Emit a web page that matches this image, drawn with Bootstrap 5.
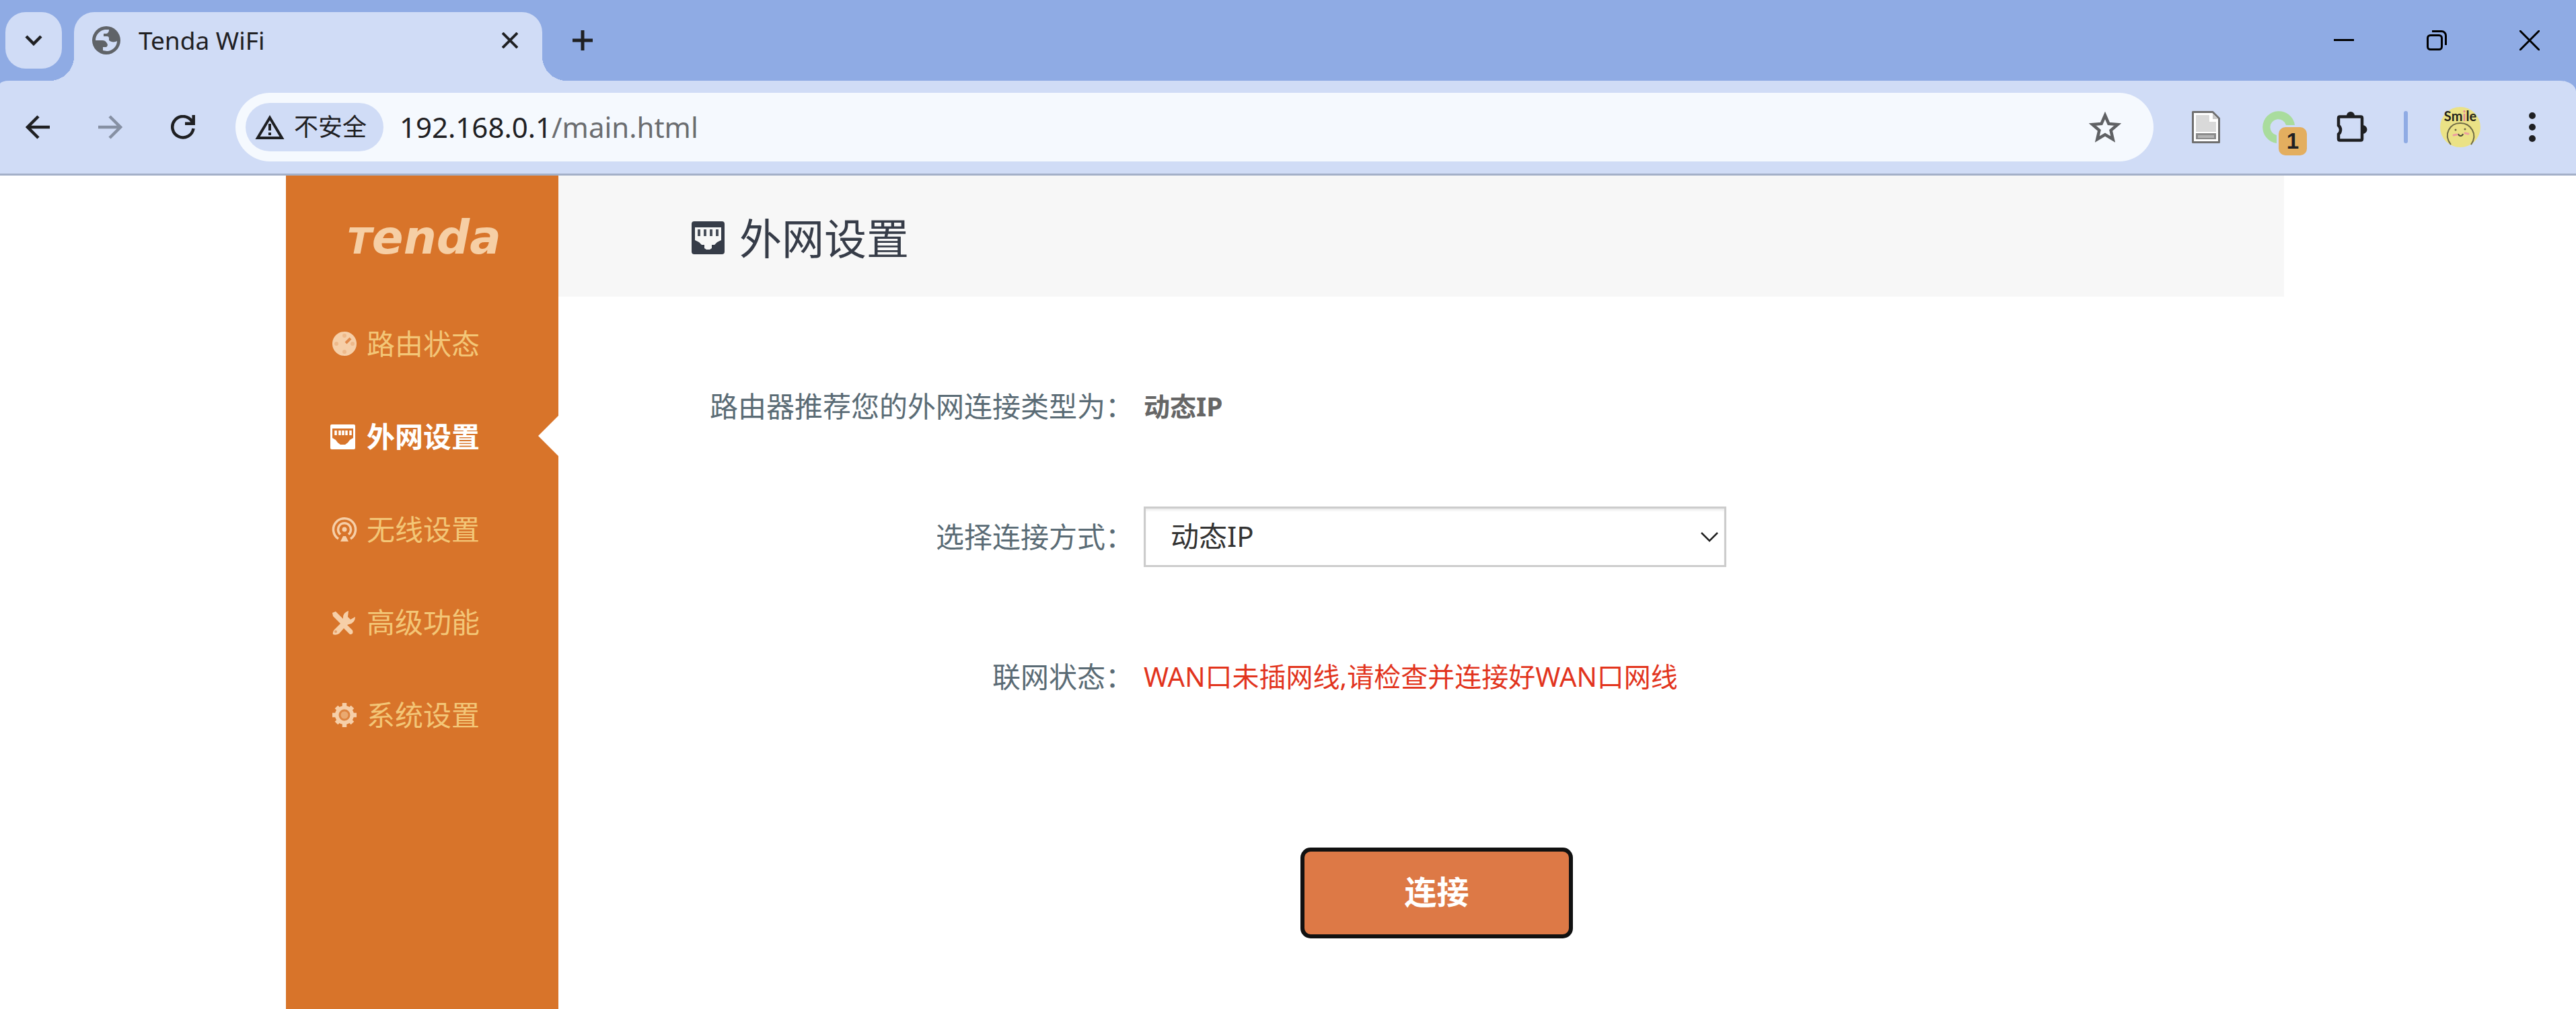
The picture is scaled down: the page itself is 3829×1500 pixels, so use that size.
<!DOCTYPE html>
<html lang="zh-CN">
<head>
<meta charset="utf-8">
<meta name="viewport" content="width=device-width, initial-scale=1">
<title>Tenda WiFi</title>
<link href="https://cdn.jsdelivr.net/npm/bootstrap@5.3.0/dist/css/bootstrap.min.css" rel="stylesheet">
<style>
  body { font-family: "Noto Sans", "Noto Sans CJK SC", sans-serif; color: #333; background: #fff; }
  svg { display: block; flex: none; }
  .icon-btn { background: none; border: 0; padding: 0; color: #1f2023; display: flex; align-items: center; justify-content: center; }

  /* tab strip */
  .tabstrip { height: 120px; background: #8fabe4; padding: 18px 0 0 8px; color: #1f2023; }
  .tab-search { width: 84px; height: 84px; border-radius: 30px; background: #d0dcf6; margin-right: 18px; }
  .tab-active { position: relative; width: 696px; height: 102px; border-radius: 30px 30px 0 0; background: #d0dcf6; padding: 0 36px 18px 27px; gap: 27px; font-size: 37px; line-height: 48px; }
  .tab-active::before, .tab-active::after { content: ""; position: absolute; bottom: 0; width: 36px; height: 36px; }
  .tab-active::before { right: 100%; background: radial-gradient(circle at 0 0, transparent 36px, #d0dcf6 36px); }
  .tab-active::after { left: 100%; background: radial-gradient(circle at 100% 0, transparent 36px, #d0dcf6 36px); }
  .tab-new { width: 84px; height: 84px; margin-left: 18px; }
  .win-btn { width: 138px; height: 84px; color: #000; }

  /* toolbar */
  .toolbar-wrap { background: #8fabe4; }
  .toolbar { height: 141px; border-bottom: 3px solid #a4b0c8; background: #d0dcf6; border-radius: 14px 24px 0 0 / 5px 16px 0 0; padding-left: 2px; }
  .tool-btn { width: 108px; height: 102px; }
  .tool-btn.is-off { color: #8690a3; }
  .omnibox { height: 102px; border-radius: 51px; background: #f5f9fe; margin-left: 24px; padding: 0 48px 0 15px; }
  .omnibox .fav-star { color: #5f6164; }
  .chip { height: 72px; border-radius: 36px; background: #d0dcf6; color: #1f2023; font-size: 36px; line-height: 48px; padding: 0 25px 0 14px; gap: 14px; }
  .address { font-size: 42px; line-height: 60px; margin-left: 24px; color: #1f2023; text-decoration: none; }
  .address span { color: #6b6d70; }
  .ext-tray { padding: 0 60px 0 54px; gap: 54px; }
  .ext-group { gap: 60px; }
  .ext-btn { width: 48px; height: 72px; position: relative; }
  .ext-count { position: absolute; left: 24px; top: 36px; width: 42px; height: 42px; border-radius: 10px; background: #e3ae5f; color: #1f2023; font: bold 33px/42px "Liberation Sans", sans-serif; text-align: center; }
  .tool-divider { width: 6px; height: 48px; border-radius: 3px; background: #8fabe4; }
  .tray-end { gap: 48px; }
  .menu-dots { margin-left: 24px; }

  /* router page */
  .page { padding-right: 9px; }
  .page-inner { max-width: 2970px; width: 100%; }
  .side { width: 405px; background: #d8742a; }
  .brand { height: 180px; color: #f6cfa5; font: italic bold 69px/1 "DejaVu Sans", sans-serif; padding: 58px 0 0 91px; text-decoration: none; }
  .brand span { font-size: 54px; }
  .side .nav-link { height: 138px; padding: 2px 0 0 66px; gap: 12px; font-size: 42px; line-height: 60px; color: #f3c677; position: relative; }
  .side .nav-link svg { color: #f6cfa8; }
  .side .nav-link.active { color: #fff; font-weight: 700; }
  .side .nav-link.active svg { color: #fff; }
  .side .nav-link.active::after { content: ""; position: absolute; right: 0; top: 39px; border: solid transparent; border-width: 30px 30px 30px 0; border-right-color: #fff; }
  .page-head { height: 180px; background: #f7f7f7; color: #363c48; padding: 5px 0 0 198px; gap: 22px; }
  .page-head h1 { font-size: 63px; line-height: 90px; font-weight: 400; margin: 0; }
  .wan-form { padding-top: 118px; font-size: 42px; }
  .form-line { min-height: 90px; line-height: 60px; }
  .form-line .name { color: #5a6b75; }
  .form-line .val { padding-left: 15px; }
  .gap-a { margin-bottom: 104px; }
  .gap-b { margin-bottom: 118px; }
  .gap-c { margin-bottom: 209px; }
  .form-line .kind { color: #666; font-size: 39px; }
  .form-line .warn { color: #e2341d; font-size: 40px; }
  .select-box { position: relative; max-width: 866px; }
  .select-box svg { position: absolute; right: 12px; top: 37px; pointer-events: none; }
  .select-box select { -webkit-appearance: none; appearance: none; display: block; width: 100%; height: 90px; border: 3px solid #ccc; border-radius: 0; background: #fff; color: #333; font-size: 42px; line-height: 60px; padding: 0 60px 3px 37px; box-shadow: inset 0 3px 3px rgba(0,0,0,.075); }
  .actions { padding-left: 248px; }
  .btn-connect { width: 405px; height: 135px; border: 6px solid #111; border-radius: 15px; background: #dd7946; color: #fff; font-size: 48px; line-height: 60px; font-weight: 700; padding: 0 0 3px; }
</style>
</head>
<body class="d-flex flex-column min-vh-100">

<header>
  <div class="tabstrip d-flex">
    <button class="icon-btn tab-search" aria-label="Search tabs"><svg width="30" height="30" viewBox="0 0 30 30"><path d="M4 9l11 11L26 9" fill="none" stroke="currentColor" stroke-width="4.500"/></svg></button>
    <div class="tab-active d-flex align-items-center">
      <svg width="42" height="42" viewBox="0 0 42 42"><circle cx="21" cy="21" r="21" fill="#5f6368"/><path d="M5 21C5 13 11 6 19 5H25C25 9 23 11 20 11H17V15H22C24 15 25 16 25 18V21C28 24 34 24 37 22C37 30 30 37 22 37L16 36V31H21C24 29 23 26 21 24C20 22 18 21 15 21Z" fill="#d0dcf6"/></svg>
      <span>Tenda WiFi</span>
      <button class="icon-btn ms-auto" aria-label="Close tab"><svg width="24" height="24" viewBox="0 0 24 24"><path d="M1 1l22 22M23 1L1 23" stroke="currentColor" stroke-width="4"/></svg></button>
    </div>
    <button class="icon-btn tab-new" aria-label="New tab"><svg width="30" height="30" viewBox="0 0 30 30"><path d="M15 0v30M0 15h30" stroke="currentColor" stroke-width="5"/></svg></button>
    <div class="d-flex ms-auto">
      <button class="icon-btn win-btn" aria-label="Minimize"><svg width="30" height="30" viewBox="0 0 30 30"><path d="M0 14.500h30" stroke="currentColor" stroke-width="3"/></svg></button>
      <button class="icon-btn win-btn" aria-label="Restore"><svg width="30" height="30" viewBox="0 0 30 30"><g fill="none" stroke="currentColor" stroke-width="3"><rect x="1.500" y="7.500" width="21" height="21" rx="4"/><path d="M8 1.500h14a6.500 6.500 0 0 1 6.500 6.500v14"/></g></svg></button>
      <button class="icon-btn win-btn" aria-label="Close"><svg width="30" height="30" viewBox="0 0 30 30"><path d="M0 0l30 30M30 0L0 30" stroke="currentColor" stroke-width="3"/></svg></button>
    </div>
  </div>

  <div class="toolbar-wrap">
  <div class="toolbar d-flex align-items-center">
    <button class="icon-btn tool-btn" aria-label="Back"><svg width="36" height="36" viewBox="0 0 36 36"><path d="M36 18H4M19 2L3 18l16 16" fill="none" stroke="currentColor" stroke-width="4.500"/></svg></button>
    <button class="icon-btn tool-btn is-off" aria-label="Forward"><svg width="36" height="36" viewBox="0 0 36 36"><path d="M0 18h32M17 2l16 16-16 16" fill="none" stroke="currentColor" stroke-width="4.500"/></svg></button>
    <button class="icon-btn tool-btn" aria-label="Reload"><svg width="36" height="36" viewBox="0 0 36 36"><path d="M33.500 20A15.700 15.700 0 1 1 31 9l2 3M33.700 0v12.700H21" fill="none" stroke="currentColor" stroke-width="4.500"/></svg></button>
    <div class="omnibox d-flex align-items-center flex-grow-1">
      <button class="chip btn d-flex align-items-center border-0"><svg width="44" height="36" viewBox="0 0 44 36"><path d="M22 4L4 34h36z" fill="none" stroke="currentColor" stroke-width="4"/><path d="M22 13v10M22 26v4" stroke="currentColor" stroke-width="4"/></svg>不安全</button>
      <a class="address" href="#">192.168.0.1<span>/main.html</span></a>
      <button class="icon-btn fav-star ms-auto" aria-label="Bookmark"><svg width="48" height="48" viewBox="0 0 48 48"><path d="M24 6.500l5.400 12.400 13.400 1.100-10.200 8.800 3.100 13.200L24 35l-11.700 7 3.100-13.200L5.200 20l13.400-1.100z" fill="none" stroke="currentColor" stroke-width="4.500"/></svg></button>
    </div>
    <div class="ext-tray d-flex align-items-center flex-shrink-0">
      <div class="ext-group d-flex align-items-center">
        <button class="icon-btn ext-btn" aria-label="Document extension"><svg width="42" height="48" viewBox="0 0 42 48"><path d="M1.500 1.500H31L40.500 11V46.500H1.500z" fill="#fff" stroke="#6f6f6f" stroke-width="3" stroke-linejoin="round"/><path d="M6 6H26V16H36V31H6z" fill="#d9d9d9"/><path d="M31 4v8h8z" fill="#c9c9c9"/><path d="M6 33h30v9H6z" fill="#8b8b8b"/><path d="M9 36h24v4H9z" fill="#b5b5b5"/></svg></button>
        <button class="icon-btn ext-btn" aria-label="Extension with one notice"><svg width="48" height="48" viewBox="0 0 48 48"><path d="M48 21A24 24 0 1 0 21 48V36A12 12 0 1 1 35 21z" fill="#a9dc9d"/></svg><span class="ext-count">1</span></button>
        <button class="icon-btn ext-btn" aria-label="Extensions"><svg width="54" height="54" viewBox="0 0 54 54"><path d="M10 11.500h31q2 0 2 2v31q0 2-2 2H10q-2 0-2-2V37.500a8.500 8.500 0 0 0 0-13V13.500q0-2 2-2z" fill="none" stroke="currentColor" stroke-width="4.500"/><path d="M20 10a6 6 0 0 1 12 0zM44 24a6.500 6.500 0 0 1 0 13z" fill="currentColor"/></svg></button>
      </div>
      <div class="tray-end d-flex align-items-center">
        <span class="tool-divider"></span>
        <button class="icon-btn" aria-label="Profile"><svg width="60" height="60" viewBox="0 0 60 60"><circle cx="30" cy="30" r="30" fill="#ebe286"/><path d="M16 56C4 40 15 24 30 24S57 40 46 56" fill="none" stroke="#6f6b45" stroke-width="2"/><path d="M27 40c1 4 6 4 7 0" fill="none" stroke="#4b4834" stroke-width="2"/><circle cx="23" cy="34" r="1.500" fill="#6f6b45"/><circle cx="37" cy="33" r="1.500" fill="#6f6b45"/><path d="M20 42l5-1M37 39l5 1" stroke="#eda0a0" stroke-width="3" stroke-linecap="round"/><text x="30" y="21" text-anchor="middle" font-family="Lato, sans-serif" font-size="20" font-weight="700" fill="#23231c">Sm<tspan fill="#e58a94">i</tspan>le</text></svg></button>
        <button class="icon-btn menu-dots" aria-label="Menu"><svg width="10" height="44" viewBox="0 0 10 44"><g fill="currentColor"><circle cx="5" cy="5" r="5"/><circle cx="5" cy="22" r="5"/><circle cx="5" cy="39" r="5"/></g></svg></button>
      </div>
    </div>
  </div>
  </div>
</header>

<div class="page d-flex flex-grow-1 justify-content-center">
  <div class="page-inner d-flex">
    <nav class="side flex-shrink-0">
      <a class="brand d-block" href="#"><span>T</span>enda</a>
      <div class="nav flex-column">
        <a class="nav-link d-flex align-items-center" href="#"><svg width="42" height="42" viewBox="0 0 42 42"><circle cx="21" cy="21" r="18" fill="currentColor"/><g fill="#eeb98a"><circle cx="21" cy="9" r="3"/><circle cx="9" cy="21" r="3"/><circle cx="33" cy="21" r="3"/><circle cx="21" cy="33" r="3"/></g><path d="M23 20l7-7" stroke="#e0894a" stroke-width="4"/></svg>路由状态</a>
        <a class="nav-link active d-flex align-items-center" href="#" aria-current="page"><svg width="42" height="42" viewBox="0 0 42 42"><rect x="0" y="3" width="37" height="37" rx="2" fill="currentColor"/><path d="M3 9h31v14l-5 3-3 4-4 3h-7l-4-3-3-4-5-3z" fill="#d8742a"/><path d="M8 12v7M14 12v7M19 12v7M24 12v7M30 12v7" stroke="currentColor" stroke-width="3.500"/></svg>外网设置</a>
        <a class="nav-link d-flex align-items-center" href="#"><svg width="42" height="42" viewBox="0 0 42 42"><g fill="none" stroke="currentColor" stroke-width="3.500"><path d="M12 35A16.500 16.500 0 1 1 30 35"/><path d="M15 28.500A9.500 9.500 0 1 1 27 28.500"/></g><circle cx="21" cy="21" r="3.500" fill="currentColor"/><path d="M19 31h4l4 8H15z" fill="currentColor"/></svg>无线设置</a>
        <a class="nav-link d-flex align-items-center" href="#"><svg width="42" height="42" viewBox="0 0 42 42"><path d="M3 7l5-2 11 11q-1-9 8-12l-1 9 4 4 7-4q0 9-9 11l-3 1 8 8q2 6-4 6l-9-9-7 8q-5 3-9 1-1-4 2-7l9-9L4 12z" fill="currentColor"/><circle cx="8" cy="35" r="2" fill="#e5a06a"/></svg>高级功能</a>
        <a class="nav-link d-flex align-items-center" href="#"><svg width="42" height="42" viewBox="0 0 42 42"><g stroke="currentColor" stroke-width="6.500"><path d="M21 3v36M3 21h36M9 9l24 24M33 9L9 33"/></g><circle cx="21" cy="21" r="14" fill="currentColor"/><circle cx="21" cy="21" r="8.500" fill="#dd8440"/><circle cx="21" cy="21" r="5.500" fill="#eaa970"/></svg>系统设置</a>
      </div>
    </nav>
    <main class="flex-grow-1">
      <div class="page-head d-flex align-items-center"><svg width="49" height="49" viewBox="0 0 49 49"><rect width="49" height="49" rx="4" fill="#363c48"/><path d="M5 9h39v19l-6 3-4 4h-4v5l-3 2h-5l-3-2v-5h-4l-4-4-6-3z" fill="#f7f7f7"/><path d="M11 12v10M20 12v10M29 12v10M38 12v10" stroke="#4a505b" stroke-width="4"/></svg><h1>外网设置</h1></div>
      <form class="wan-form">
        <div class="row g-0 form-line gap-a align-items-center"><div class="col-4 text-end name">路由器推荐您的外网连接类型为：</div><div class="col-8 val kind fw-bold">动态IP</div></div>
        <div class="row g-0 form-line gap-b align-items-center"><label class="col-4 text-end name" for="wan">选择连接方式：</label><div class="col-8 val"><div class="select-box"><select id="wan"><option>动态IP</option></select><svg width="26" height="18" viewBox="0 0 26 18"><path d="M1 2l12 12L25 2" fill="none" stroke="#222" stroke-width="2.500"/></svg></div></div></div>
        <div class="row g-0 form-line gap-c align-items-center"><div class="col-4 text-end name">联网状态：</div><div class="col-8 val warn">WAN口未插网线,请检查并连接好WAN口网线</div></div>
        <div class="row g-0"><div class="col-8 offset-4 actions"><button type="button" class="btn btn-connect">连接</button></div></div>
      </form>
    </main>
  </div>
</div>
<script src="https://cdn.jsdelivr.net/npm/bootstrap@5.3.0/dist/js/bootstrap.bundle.min.js"></script>
</body>
</html>
